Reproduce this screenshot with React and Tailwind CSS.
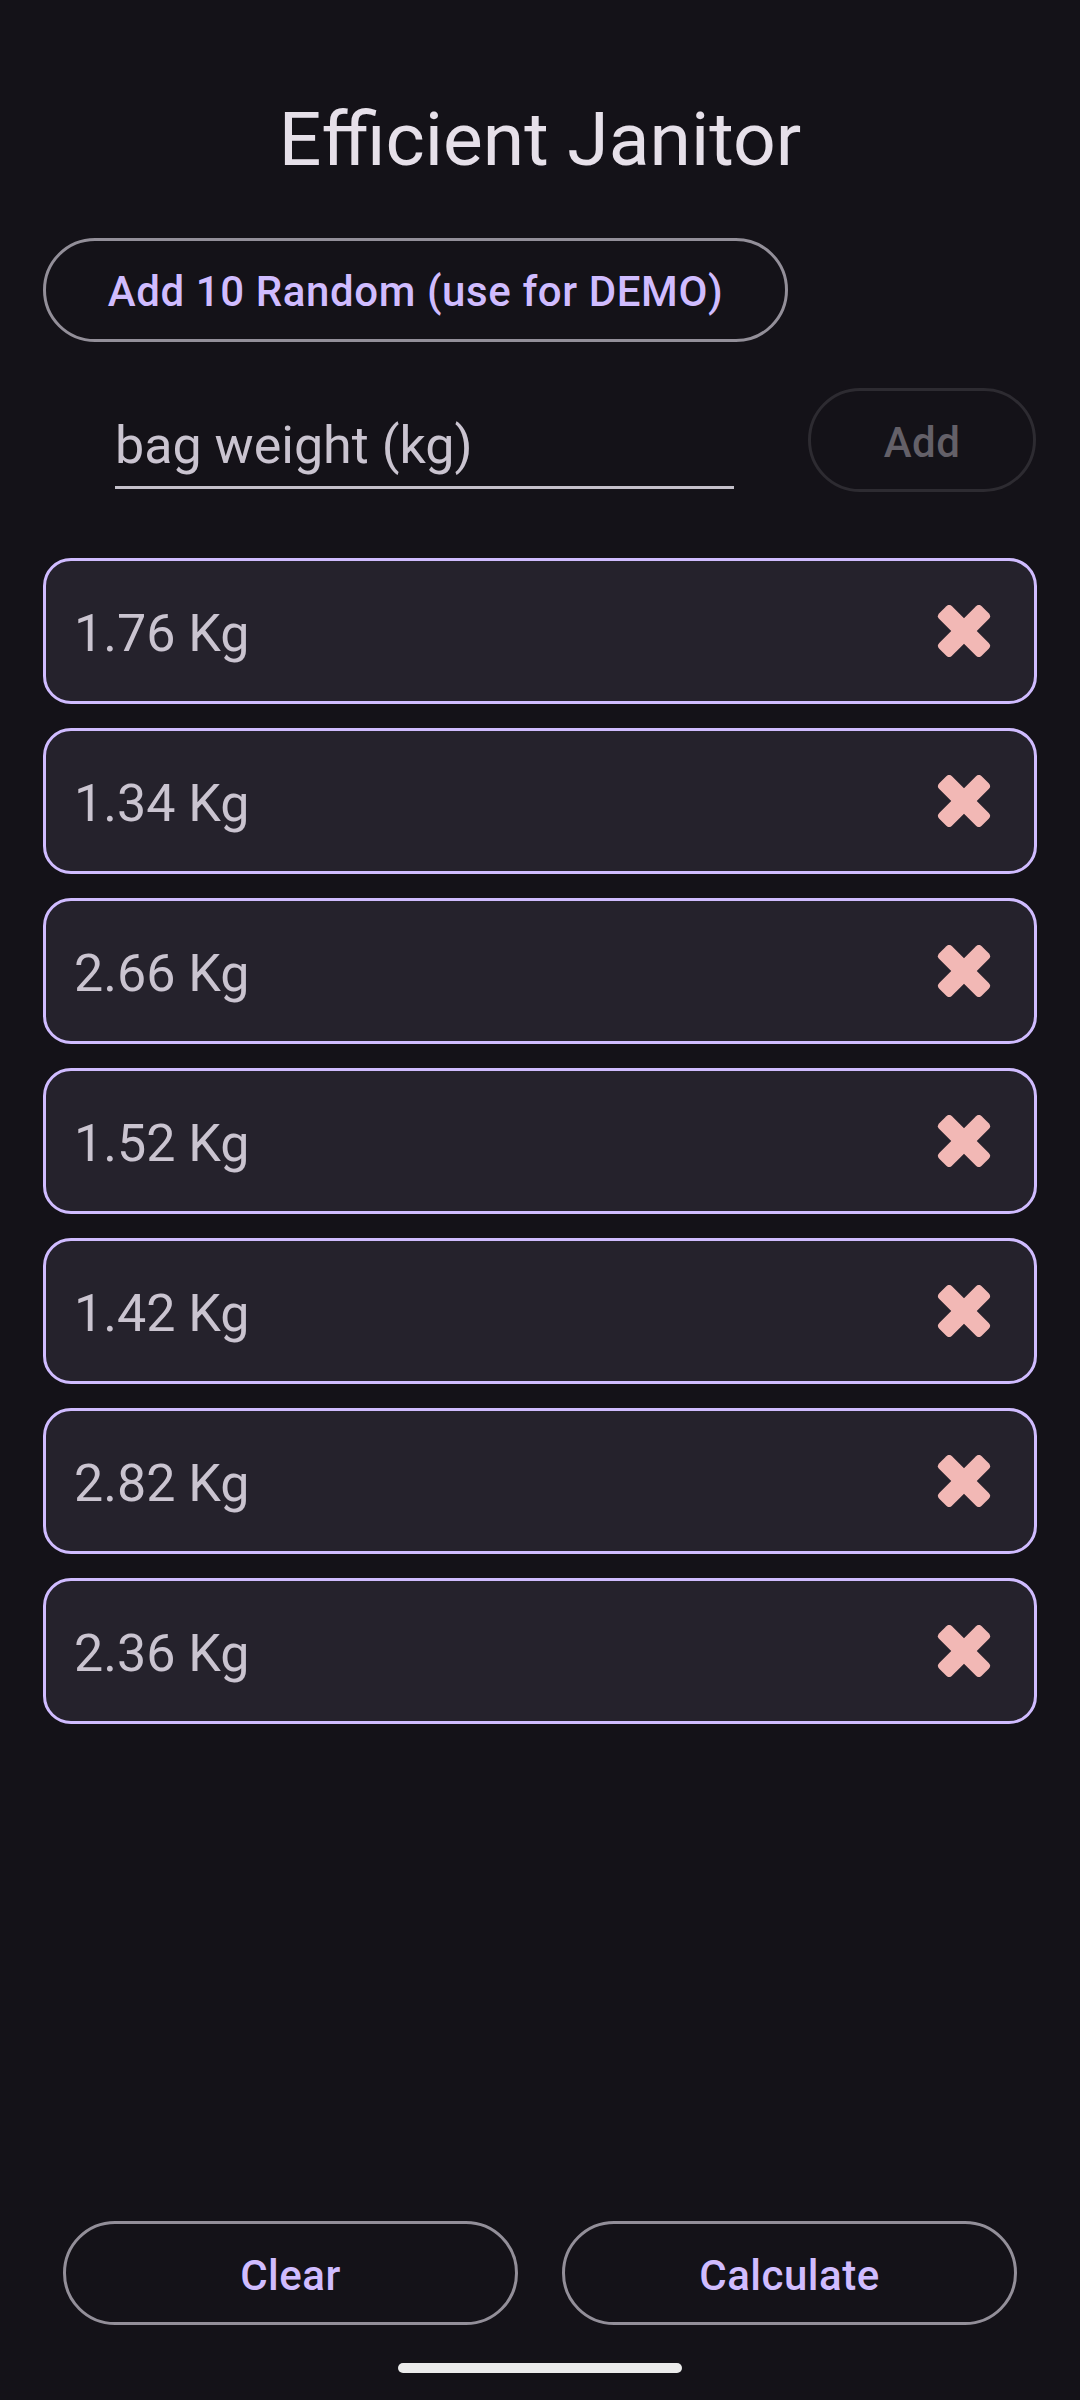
import { useState } from "react";

const weights = ["1.76", "1.34", "2.66", "1.52", "1.42", "2.82", "2.36"];

function CloseIcon() {
    return (
        <svg width="56" height="52" viewBox="0 0 56 52">
            <rect x="-30" y="-9" width="60" height="18" rx="4" fill="#F2B8B5" transform="translate(28 26) rotate(45)" />
            <rect x="-30" y="-9" width="60" height="18" rx="4" fill="#F2B8B5" transform="translate(28 26) rotate(-45)" />
        </svg>
    );
}

export default function App() {

    let [bags, setBags] = useState(weights);
    let [value, setValue] = useState("");

    return (
        <div className="w-[1080px] h-[2400px] bg-[#141218] flex flex-col font-['Roboto',sans-serif]">

            <h1 className="mt-[94px] text-center text-[75px] leading-[90px] text-[#E6E0E9] font-normal">Efficient Janitor</h1>

            <div className="px-[43px] mt-[54px]">
                <button className="h-[104px] w-[745px] pt-[3px] rounded-full border-[3px] border-[#938F99] text-[42px] tracking-[0.6px] font-medium text-[#D0BCFF]">Add 10 Random (use for DEMO)</button>
            </div>

            <div className="flex flex-row items-start justify-between pl-[115px] pr-[44px] mt-[46px]">
                <input
                    value={value}
                    onChange={(e) => setValue(e.target.value)}
                    placeholder="bag weight (kg)"
                    className="w-[619px] h-[101px] pt-[16px] bg-transparent border-b-[3px] border-[#C4C0CA] text-[52px] text-[#CAC4D0] placeholder:text-[#CAC4D0] outline-none"
                />
                <button disabled className="h-[104px] w-[228px] pt-[4px] rounded-full border-[3px] border-[#2d2b31] text-[42px] tracking-[0.5px] font-medium text-[#646068]">Add</button>
            </div>

            <div className="flex flex-col gap-[24px] px-[43px] mt-[66px]">
                {bags.map((w, i) => (
                    <div key={i} className="h-[146px] flex flex-row items-center justify-between rounded-[28px] border-[3px] border-[#D0BCFF] bg-[#25222c] pl-[28px] pr-[42px]">
                        <span className="pt-[6px] text-[52px] text-[#CAC4D0]">{w} Kg</span>
                        <button onClick={() => setBags(bags.filter((_, j) => j != i))}><CloseIcon /></button>
                    </div>
                ))}
            </div>

            <div className="flex-1" />

            <div className="flex flex-row gap-[44px] px-[63px]">
                <button className="flex-1 h-[104px] pt-[5px] rounded-full border-[3px] border-[#938F99] text-[42px] tracking-[0.5px] font-medium text-[#D0BCFF]" onClick={() => setBags([])}>Clear</button>
                <button className="flex-1 h-[104px] pt-[5px] rounded-full border-[3px] border-[#938F99] text-[42px] tracking-[0.5px] font-medium text-[#D0BCFF]">Calculate</button>
            </div>

            <div className="mt-[38px] mb-[27px] mx-auto w-[284px] h-[10px] rounded-full bg-[#EBEBEB]" />
        </div>
    );
}
